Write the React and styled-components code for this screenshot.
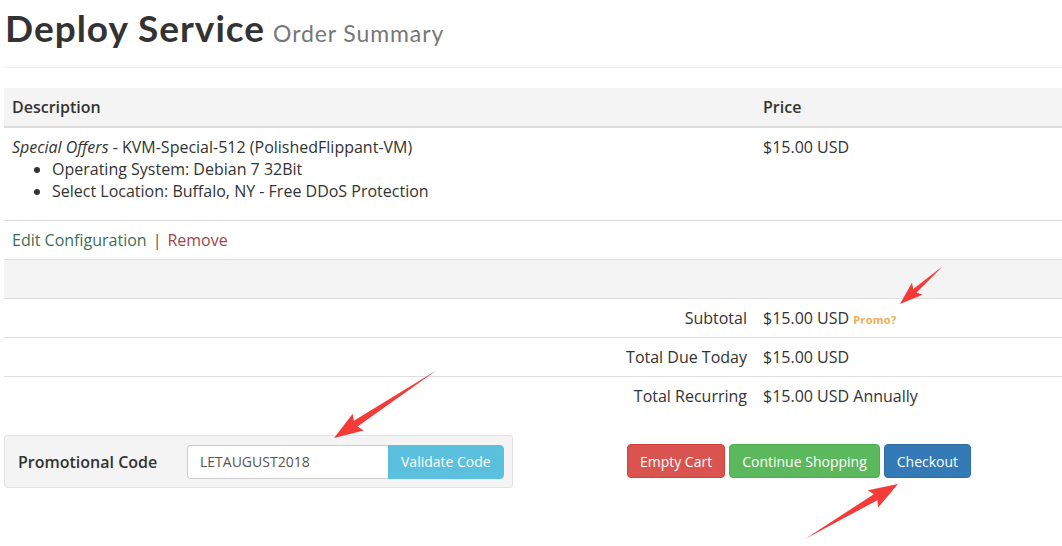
import React from "react"
import styled, { createGlobalStyle } from "styled-components"

const GlobalStyle = createGlobalStyle`
  html, body {
    margin: 0;
    padding: 0;
    background: #fff;
  }
  body {
    font-family: "Open Sans", "Liberation Sans", sans-serif;
    font-size: 16px;
    line-height: 22px;
    color: #333;
  }
`

const Page = styled.div`
  position: relative;
  width: 1062px;
  height: 546px;
  overflow: hidden;
  padding-left: 4px;
  box-sizing: border-box;
`

const Header = styled.div`
  padding: 8px 0 0 1px;
  height: 68px;
  box-sizing: border-box;
  border-bottom: 1px solid #eee;
  margin-bottom: 20px;
  display: flex;
  align-items: baseline;
  gap: 8px;
`

const Title = styled.h1`
  margin: 0;
  font-family: "Lato", "Open Sans", sans-serif;
  font-weight: 700;
  font-size: 37px;
  line-height: 40px;
  letter-spacing: 1px;
  color: #333;
`

const SubTitle = styled.small`
  font-family: "Lato", "Open Sans", sans-serif;
  font-size: 23px;
  font-weight: 400;
  letter-spacing: 0.9px;
  color: #777;
`

const Table = styled.table`
  width: 1058px;
  border-collapse: collapse;
  margin-bottom: 20px;
`

const HeadCell = styled.th`
  background: #f4f4f4;
  text-align: left;
  font-weight: 600;
  padding: 8px;
  border-bottom: 2px solid #ddd;
  width: ${p => p.$width || "auto"};
`

const Cell = styled.td`
  padding: 8px;
  vertical-align: top;
  text-align: ${p => (p.$right ? "right" : "left")};
  border-top: ${p => (p.$noBorder ? "none" : "1px solid #ddd")};
  background: ${p => (p.$shade ? "#f4f4f4" : "transparent")};
  height: 22px;
`

const Options = styled.ul`
  margin: 0 0 10px;
  padding-left: 40px;
`

const Link = styled.a`
  color: ${p => p.$color};
  text-decoration: none;
`

const Sep = styled.span`
  color: #555;
  margin: 0 6px;
`

const Promo = styled.span`
  color: #f0ad4e;
  font-size: 11px;
  line-height: 1;
  letter-spacing: 0.3px;
  font-weight: 700;
  margin-left: 4px;
`

const Bottom = styled.div`
  display: grid;
  grid-template-columns: 529px 1fr;
`

const Well = styled.div`
  width: 509px;
  height: 53px;
  box-sizing: border-box;
  background: #f4f4f4;
  border: 1px solid #e3e3e3;
  border-radius: 3px;
  display: flex;
  align-items: center;
  padding: 0 9px 0 13px;
`

const PromoLabel = styled.label`
  width: 169px;
  flex-shrink: 0;
  font-weight: 600;
  font-size: 16px;
`

const InputGroup = styled.div`
  display: flex;
  height: 34px;
`

const CodeInput = styled.input`
  width: 201px;
  flex-shrink: 0;
  height: 34px;
  box-sizing: border-box;
  border: 1px solid #ccc;
  border-right: none;
  border-radius: 4px 0 0 4px;
  padding: 0 12px;
  font-family: "Open Sans", sans-serif;
  font-size: 14px;
  color: #555;
  outline: none;
  background: #fff;
`

const Btn = styled.button`
  height: 34px;
  box-sizing: border-box;
  padding: 0 12px;
  flex-shrink: 0;
  white-space: nowrap;
  font-family: "Open Sans", sans-serif;
  font-size: 14px;
  color: #fff;
  background: ${p => p.$bg};
  border: 1px solid ${p => p.$border};
  border-radius: ${p => (p.$group ? "0 4px 4px 0" : "4px")};
  cursor: pointer;
`

const Actions = styled.div`
  display: flex;
  justify-content: center;
  gap: 4px;
  padding: 9px 0 0 3px;
`

const Overlay = styled.svg`
  position: absolute;
  left: 0;
  top: 0;
  pointer-events: none;
`

const arrowPoints = (tx, ty, px, py, headLen = 22, headHalf = 9, shaft = 3) => {
  const dx = px - tx
  const dy = py - ty
  const len = Math.hypot(dx, dy)
  const ux = dx / len
  const uy = dy / len
  const nx = -uy
  const ny = ux
  const bx = px - ux * headLen
  const by = py - uy * headLen
  const pts = [
    [tx, ty],
    [bx + nx * shaft, by + ny * shaft],
    [bx + nx * headHalf - ux * 3, by + ny * headHalf - uy * 3],
    [px, py],
    [bx - nx * headHalf - ux * 3, by - ny * headHalf - uy * 3],
    [bx - nx * shaft, by - ny * shaft],
  ]
  return pts.map(p => p.map(v => v.toFixed(1)).join(",")).join(" ")
}

const arrows = [
  [943, 266, 900, 304, 20, 8, 2.5],
  [437, 370, 334, 438, 26, 10, 3.5],
  [805, 539, 898, 484, 26, 10, 3.5],
]

const totals = [
  { label: "Subtotal", value: "$15.00 USD", promo: true },
  { label: "Total Due Today", value: "$15.00 USD" },
  { label: "Total Recurring", value: "$15.00 USD Annually" },
]

const App = () => (
  <Page>
    <GlobalStyle />
    <Header>
      <Title>Deploy Service</Title>
      <SubTitle>Order Summary</SubTitle>
    </Header>

    <Table>
      <thead>
        <tr>
          <HeadCell $width="735px">Description</HeadCell>
          <HeadCell>Price</HeadCell>
        </tr>
      </thead>
      <tbody>
        <tr>
          <Cell $noBorder>
            <em>Special Offers</em> - KVM-Special-512 (PolishedFlippant-VM)
            <Options>
              <li>Operating System: Debian 7 32Bit</li>
              <li>Select Location: Buffalo, NY - Free DDoS Protection</li>
            </Options>
          </Cell>
          <Cell $noBorder>$15.00 USD</Cell>
        </tr>
        <tr>
          <Cell>
            <Link $color="#3b6e55">Edit Configuration</Link>
            <Sep>|</Sep>
            <Link $color="#a0434b">Remove</Link>
          </Cell>
          <Cell />
        </tr>
        <tr>
          <Cell $shade />
          <Cell $shade />
        </tr>
        {totals.map(t => (
          <tr key={t.label}>
            <Cell $right>{t.label}</Cell>
            <Cell>
              {t.value}
              {t.promo && <Promo>Promo?</Promo>}
            </Cell>
          </tr>
        ))}
      </tbody>
    </Table>

    <Bottom>
      <Well>
        <PromoLabel>Promotional Code</PromoLabel>
        <InputGroup>
          <CodeInput defaultValue="LETAUGUST2018" />
          <Btn $group $bg="#5bc0de" $border="#5bc0de">Validate Code</Btn>
        </InputGroup>
      </Well>
      <Actions>
        <Btn $bg="#d9534f" $border="#d43f3a">Empty Cart</Btn>
        <Btn $bg="#5cb85c" $border="#4cae4c">Continue Shopping</Btn>
        <Btn $bg="#337ab7" $border="#2e6da4">Checkout</Btn>
      </Actions>
    </Bottom>

    <Overlay width="1062" height="546" viewBox="0 0 1062 546">
      {arrows.map((a, i) => (
        <polygon key={i} points={arrowPoints(...a)} fill="#f53a3a" />
      ))}
    </Overlay>
  </Page>
)

export default App
